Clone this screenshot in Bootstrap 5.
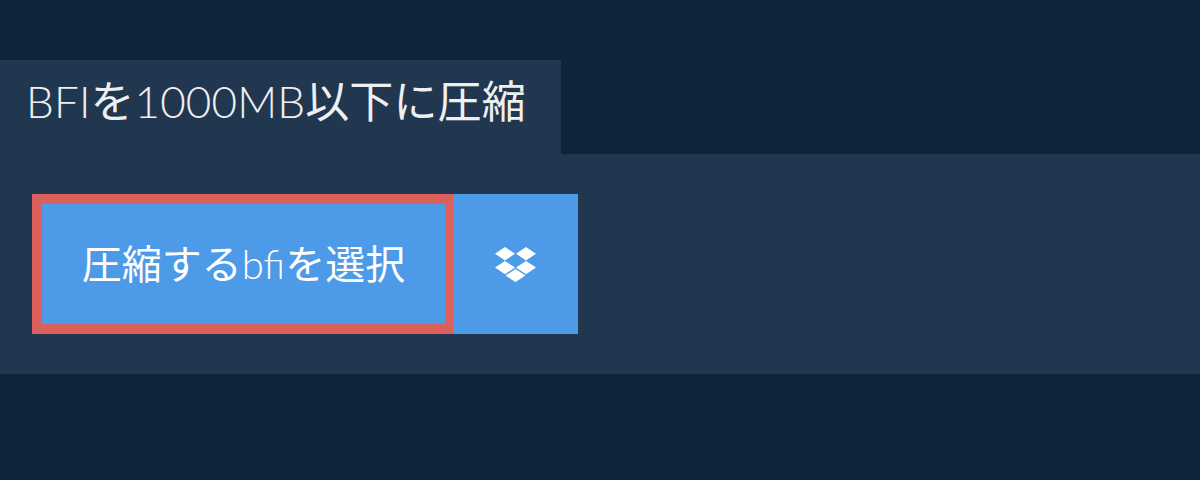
<!DOCTYPE html>
<html lang="ja"><head><meta charset="utf-8">
<link href="https://cdn.jsdelivr.net/npm/bootstrap@5.3.0/dist/css/bootstrap.min.css" rel="stylesheet">
<style>
html,body{height:480px;overflow:hidden}
body{background:#0e2539;font-family:Lato,"Noto Sans CJK JP",sans-serif;padding-top:60px;color:#eeeff1}
.tabhead{background:#20374f;width:561px;height:94px;padding:14px 0 0 26px;font-size:44px;line-height:54px;font-weight:400;letter-spacing:.12px;white-space:nowrap}
.lightlatin{font-weight:300}
.panelbox{background:#20374f;height:220px;padding:40px 32px}
.pickbtn{width:421px;height:140px;background:#4d9ae8;border:10px solid #dd5f5c;border-right-width:8px;color:#fff;font-size:40px;font-weight:400;border-radius:0;padding:0;white-space:nowrap}
.dropbtn{width:125px;height:140px;background:#4d9ae8;border:0;border-radius:0;padding:0}
</style></head><body>
<div class="tabhead"><span class="lightlatin">BFI</span>を<span class="lightlatin">1000MB</span>以下に圧縮</div>
<div class="panelbox d-flex">
<button class="btn pickbtn d-flex align-items-center justify-content-center">圧縮する<span class="lightlatin">bfi</span>を選択</button>
<button class="btn dropbtn d-flex align-items-center justify-content-center" aria-label="Dropbox">
<svg width="41" height="35" viewBox="0 0 41 35" fill="#fff"><path d="M10 0 0 6.7l10 6.7 10-6.7zM31 0 21 6.7l10 6.7 10-6.7zM10 14 0 20.5l10 6.7 10-6.7zM31 14 21 20.5l10 6.7 10-6.7zM20.5 22 10.5 28.5l10 6.5 10-6.5z"/></svg>
</button>
</div>
<script src="https://cdn.jsdelivr.net/npm/bootstrap@5.3.0/dist/js/bootstrap.bundle.min.js"></script>
</body></html>
